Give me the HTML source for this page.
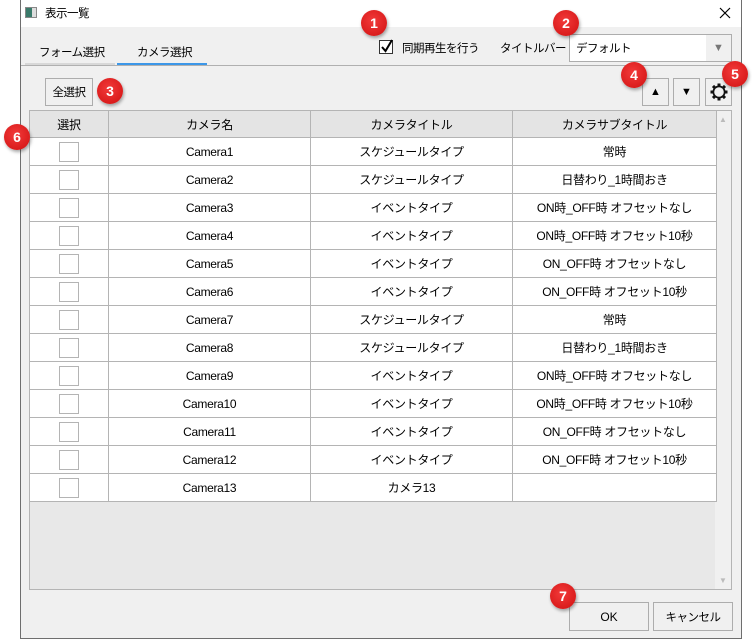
<!DOCTYPE html>
<html><head><meta charset="utf-8"><style>
*{box-sizing:border-box;margin:0;padding:0}
body{width:752px;height:639px;background:#fff;position:relative;overflow:hidden;font-family:"Liberation Sans","Noto Sans CJK JP",sans-serif;font-size:12px;color:#000}
.a{position:absolute}
.j{font-size:11.5px;letter-spacing:-0.5px}
.win{left:20px;top:0;width:722px;height:639px;border:1px solid #6e6e6e;border-top:none;background:#f0f0f0}
.btn{position:absolute;border:1px solid #adadad;background:#f0f0f0;display:flex;align-items:center;justify-content:center}
.badge{position:absolute;width:26px;height:26px;border-radius:50%;background:radial-gradient(circle at 45% 40%,#f23a3a,#d01010);color:#fff;font-weight:bold;font-size:14px;display:flex;align-items:center;justify-content:center;box-shadow:1px 2px 3px rgba(0,0,0,.35)}
table{border-collapse:collapse;table-layout:fixed}
td{border:1px solid #b4b4b4;height:28px;text-align:center;background:#fff;font-size:12px;letter-spacing:-0.3px}
th{border:1px solid #b4b4b4;height:27px;background:#e4e4e4;font-weight:normal;font-size:12px;letter-spacing:-0.3px}
.cb{display:inline-block;width:20px;height:20px;border:1px solid #b4b4b4;vertical-align:middle}
</style></head><body>
<div class="a win"></div>
<div class="a" style="left:21px;top:0;width:720px;height:27px;background:#fff"></div>
<div class="a" style="left:25px;top:7px;width:12px;height:11px;border:1px solid #888;background:linear-gradient(90deg,#3a7a6a 60%,#ddd 60%)"></div>
<div class="a j" style="left:45px;top:5px">表示一覧</div>
<svg class="a" style="left:719px;top:7px" width="12" height="12"><path d="M1 1L11 11M11 1L1 11" stroke="#000" stroke-width="1.2"/></svg>
<div class="a j" style="left:39px;top:44px">フォーム選択</div>
<div class="a j" style="left:137px;top:44px">カメラ選択</div>
<div class="a" style="left:25px;top:63px;width:90px;height:2px;background:#d8d8d8"></div>
<div class="a" style="left:117px;top:63px;width:90px;height:2px;background:#3c97e8"></div>
<div class="a" style="left:21px;top:65px;width:720px;height:1px;background:#b0b0b0"></div>
<div class="a" style="left:379px;top:40px;width:14px;height:14px;border:1px solid #333;background:#fff"></div>
<svg class="a" style="left:379px;top:38px" width="16" height="16"><path d="M3 9L6.5 13L13 2" fill="none" stroke="#000" stroke-width="2"/></svg>
<div class="a j" style="left:402px;top:40px">同期再生を行う</div>
<div class="a j" style="left:500px;top:40px">タイトルバー :</div>
<div class="a" style="left:569px;top:34px;width:163px;height:28px;border:1px solid #adadad;background:#fff"></div>
<div class="a j" style="left:576px;top:40px">デフォルト</div>
<div class="a" style="left:706px;top:35px;width:25px;height:26px;background:#f0f0f0;color:#777;font-size:11px;text-align:center;line-height:26px">▼</div>
<div class="btn j" style="left:45px;top:78px;width:48px;height:28px">全選択</div>
<div class="btn" style="left:642px;top:78px;width:27px;height:28px;font-size:11px">▲</div>
<div class="btn" style="left:673px;top:78px;width:27px;height:28px;font-size:11px">▼</div>
<div class="btn" style="left:705px;top:78px;width:27px;height:28px"><svg width="20" height="20" viewBox="0 0 20 20"><g fill="#111"><circle cx="10" cy="10" r="6.5"/><g id="t"><rect x="8.5" y="1.5" width="3" height="3.5"/><rect x="8.5" y="15" width="3" height="3.5"/></g><use href="#t" transform="rotate(45 10 10)"/><use href="#t" transform="rotate(90 10 10)"/><use href="#t" transform="rotate(135 10 10)"/></g><circle cx="10" cy="10" r="4.8" fill="#f0f0f0"/></svg></div>
<div class="a" style="left:29px;top:110px;width:703px;height:480px;border:1px solid #b4b4b4;background:#e8e8e8"></div>
<div class="a" style="left:715px;top:111px;width:16px;height:478px;background:#f0f0f0;color:#bbb;font-size:8px;text-align:center"><div style="margin-top:4px">▲</div><div style="position:absolute;bottom:4px;width:16px">▼</div></div>
<table class="a" style="left:29px;top:110px;width:687px">
<colgroup><col style="width:79px"><col style="width:202px"><col style="width:202px"><col style="width:204px"></colgroup>
<tr><th>選択</th><th>カメラ名</th><th>カメラタイトル</th><th>カメラサブタイトル</th></tr>
<tr><td><span class="cb"></span></td><td>Camera1</td><td>スケジュールタイプ</td><td>常時</td></tr>
<tr><td><span class="cb"></span></td><td>Camera2</td><td>スケジュールタイプ</td><td>日替わり_1時間おき</td></tr>
<tr><td><span class="cb"></span></td><td>Camera3</td><td>イベントタイプ</td><td>ON時_OFF時 オフセットなし</td></tr>
<tr><td><span class="cb"></span></td><td>Camera4</td><td>イベントタイプ</td><td>ON時_OFF時 オフセット10秒</td></tr>
<tr><td><span class="cb"></span></td><td>Camera5</td><td>イベントタイプ</td><td>ON_OFF時 オフセットなし</td></tr>
<tr><td><span class="cb"></span></td><td>Camera6</td><td>イベントタイプ</td><td>ON_OFF時 オフセット10秒</td></tr>
<tr><td><span class="cb"></span></td><td>Camera7</td><td>スケジュールタイプ</td><td>常時</td></tr>
<tr><td><span class="cb"></span></td><td>Camera8</td><td>スケジュールタイプ</td><td>日替わり_1時間おき</td></tr>
<tr><td><span class="cb"></span></td><td>Camera9</td><td>イベントタイプ</td><td>ON時_OFF時 オフセットなし</td></tr>
<tr><td><span class="cb"></span></td><td>Camera10</td><td>イベントタイプ</td><td>ON時_OFF時 オフセット10秒</td></tr>
<tr><td><span class="cb"></span></td><td>Camera11</td><td>イベントタイプ</td><td>ON_OFF時 オフセットなし</td></tr>
<tr><td><span class="cb"></span></td><td>Camera12</td><td>イベントタイプ</td><td>ON_OFF時 オフセット10秒</td></tr>
<tr><td><span class="cb"></span></td><td>Camera13</td><td>カメラ13</td><td></td></tr>
</table>
<div class="btn" style="left:569px;top:602px;width:80px;height:29px">OK</div>
<div class="btn j" style="left:653px;top:602px;width:80px;height:29px">キャンセル</div>
<div class="badge" style="left:361px;top:10px">1</div>
<div class="badge" style="left:553px;top:10px">2</div>
<div class="badge" style="left:97px;top:78px">3</div>
<div class="badge" style="left:621px;top:62px">4</div>
<div class="badge" style="left:722px;top:61px">5</div>
<div class="badge" style="left:4px;top:124px">6</div>
<div class="badge" style="left:550px;top:583px">7</div>
</body></html>
